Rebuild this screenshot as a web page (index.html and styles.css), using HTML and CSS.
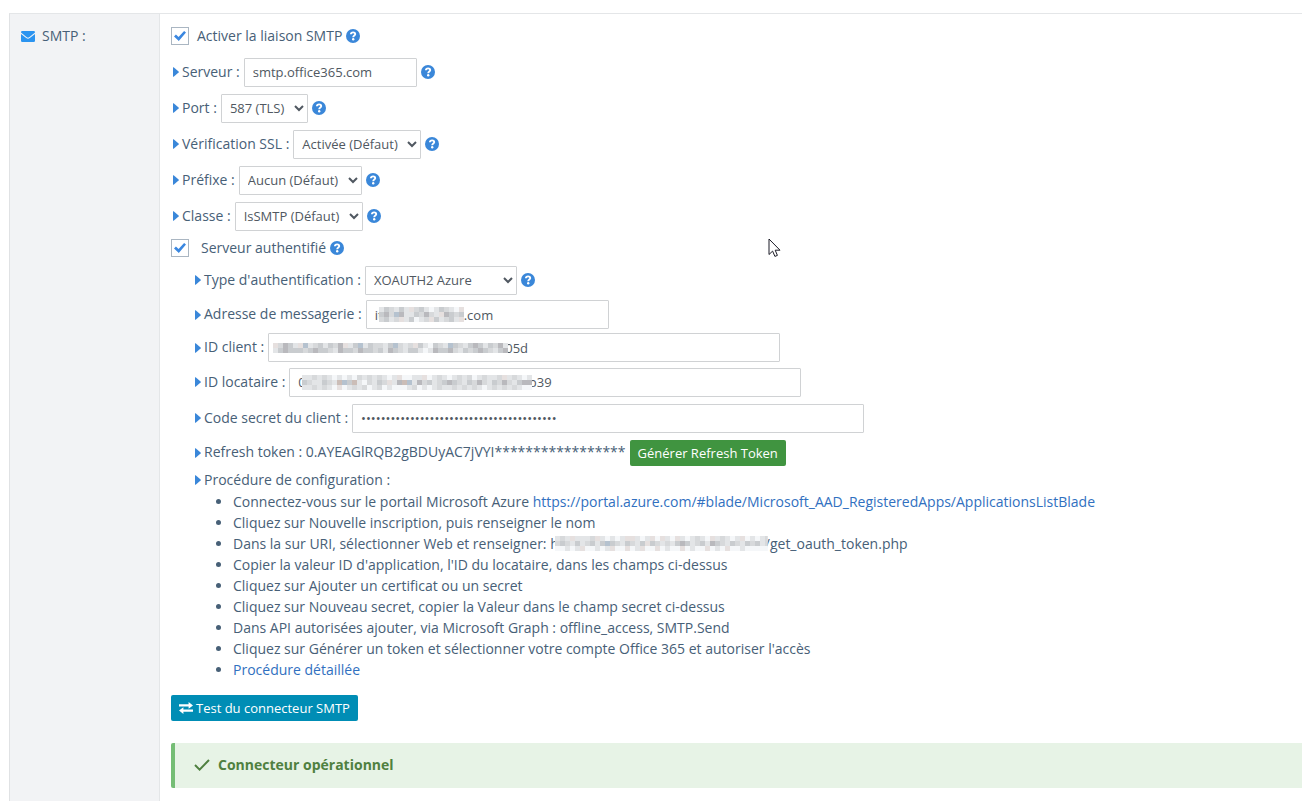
FILE: index.html
```html
<!DOCTYPE html>
<html lang="fr">
<head>
<meta charset="utf-8">
<title>Connecteur SMTP</title>
<link rel="stylesheet" href="styles.css">
</head>
<body>
<svg class="defs" aria-hidden="true">
  <symbol id="help" viewBox="0 0 14 14"><circle cx="7" cy="7" r="7" fill="#3a87d9"/><path d="M4.900 5.300C5 4 5.900 3.400 7.100 3.400S9.200 4.100 9.200 5.200C9.200 6.600 7.200 6.500 7.200 8.200" fill="none" stroke="#fff" stroke-width="1.900"/><circle cx="7.200" cy="10.300" r="1.200" fill="#fff"/></symbol>
  <symbol id="caret" viewBox="0 0 6 10"><path d="M0 .6v8.800q0 .6.600.3L5.600 5.400q.4-.4 0-.8L.6.300Q0 0 0 .6z" fill="#3a87d9"/></symbol>
</svg>
<main class="settings">
  <div class="heading">
    <svg class="mail" viewBox="0 0 14 11"><path fill="#2b94f0" d="M1.300 0h11.400Q14 0 14 1.300v.3L8.200 6.200q-1.200.9-2.400 0L0 1.600v-.3Q0 0 1.300 0zM0 3l5.200 4.100q1.800 1.300 3.600 0L14 3v6.700Q14 11 12.700 11H1.300Q0 11 0 9.700z"/></svg>
    <span>SMTP :</span>
  </div>
  <div class="content">
    <div class="row">
      <input type="checkbox" id="smtp" class="check" checked><label for="smtp" class="check-label">Activer la liaison SMTP</label>
      <svg class="help"><use href="#help"/></svg>
    </div>
    <div class="row">
      <svg class="caret"><use href="#caret"/></svg><label for="server">Serveur :</label>
      <input type="text" id="server" class="field server" value="smtp.office365.com">
      <svg class="help"><use href="#help"/></svg>
    </div>
    <div class="row">
      <svg class="caret"><use href="#caret"/></svg><label for="port">Port :</label>
      <select id="port" class="field"><option>587 (TLS)</option></select>
      <svg class="help"><use href="#help"/></svg>
    </div>
    <div class="row">
      <svg class="caret"><use href="#caret"/></svg><label for="ssl">Vérification SSL :</label>
      <select id="ssl" class="field"><option>Activée (Défaut)</option></select>
      <svg class="help"><use href="#help"/></svg>
    </div>
    <div class="row">
      <svg class="caret"><use href="#caret"/></svg><label for="prefix">Préfixe :</label>
      <select id="prefix" class="field"><option>Aucun (Défaut)</option></select>
      <svg class="help"><use href="#help"/></svg>
    </div>
    <div class="row">
      <svg class="caret"><use href="#caret"/></svg><label for="class">Classe :</label>
      <select id="class" class="field"><option>IsSMTP (Défaut)</option></select>
      <svg class="help"><use href="#help"/></svg>
    </div>
    <div class="row row-check">
      <input type="checkbox" id="auth" class="check" checked><label for="auth" class="check-label wide">Serveur authentifié</label>
      <svg class="help"><use href="#help"/></svg>
    </div>
    <div class="auth">
      <div class="row">
        <svg class="caret"><use href="#caret"/></svg><label for="type">Type d'authentification :</label>
        <select id="type" class="field type"><option>XOAUTH2 Azure</option></select>
        <svg class="help"><use href="#help"/></svg>
      </div>
      <div class="row row-tight">
        <svg class="caret"><use href="#caret"/></svg><label for="mail">Adresse de messagerie :</label>
        <div class="field masked mail-field"><span>it</span><svg class="mosaic" data-rows="dbcdbdecbdfdbcdfe bacgaddbcacdeabcb cbdcedbfdcebdcbde"></svg><input type="text" id="mail" value=".com"></div>
      </div>
      <div class="row row-tight">
        <svg class="caret"><use href="#caret"/></svg><label for="client">ID client :</label>
        <div class="field masked long"><svg class="mosaic" data-rows="ecabdegdcbdbcaedbgdbccdbgcdcebdfbcdgbcdbabdbcad dbabbbcbabbcdabbcabbcbdabcdbbdfdabbacdbcbabcdba"></svg><input type="text" id="client" value="05d"></div>
      </div>
      <div class="row">
        <svg class="caret"><use href="#caret"/></svg><label for="tenant">ID locataire :</label>
        <div class="field masked long"><span>0</span><svg class="mosaic" data-rows="ddcdcdfdfdfcdcdcdfdeffddefdcdfdcdcfdcddcedcdfd bcddbcdhgbhdfcdbcedahgdacbdcbabcdbcacdbcacdbaa ddcdcdfefdcdcfdcfdfffdcfdfdcddcdcdcdfdcdcdcdff"></svg><input type="text" id="tenant" value="b39"></div>
      </div>
      <div class="row">
        <svg class="caret"><use href="#caret"/></svg><label for="secret">Code secret du client :</label>
        <input type="password" id="secret" class="field long" value="0000000000000000000000000000000000000000">
      </div>
      <div class="row row-tight">
        <svg class="caret"><use href="#caret"/></svg><span>Refresh token : 0.AYEAGlRQB2gBDUyAC7jVYI*****************</span>
        <button type="button" class="btn btn-green">Générer Refresh Token</button>
      </div>
      <div class="row row-text"><svg class="caret"><use href="#caret"/></svg><span>Procédure de configuration :</span></div>
      <ul class="steps">
        <li>Connectez-vous sur le portail Microsoft Azure <a href="#azure">https://portal.azure.com/#blade/Microsoft_AAD_RegisteredApps/ApplicationsListBlade</a></li>
        <li>Cliquez sur Nouvelle inscription, puis renseigner le nom</li>
        <li>Dans la sur URI, sélectionner Web et renseigner: <span class="url">h<svg class="mosaic" data-rows="dcdedddcedfdfdeedfdefedfedfdcdfedcdfdefdfdcd cbcdbdcbdbgbcdbcdbebcdcdbabdcbdabcdbcdbcbdcb ffdfdeffdfdeffefdeffefdffefdffefdfeffdffffff"></svg>/get_oauth_token.php</span></li>
        <li>Copier la valeur ID d'application, l'ID du locataire, dans les champs ci-dessus</li>
        <li>Cliquez sur Ajouter un certificat ou un secret</li>
        <li>Cliquez sur Nouveau secret, copier la Valeur dans le champ secret ci-dessus</li>
        <li>Dans API autorisées ajouter, via Microsoft Graph : offline_access, SMTP.Send</li>
        <li>Cliquez sur Générer un token et sélectionner votre compte Office 365 et autoriser l'accès</li>
        <li><a href="#procedure">Procédure détaillée</a></li>
      </ul>
    </div>
    <button type="button" class="btn btn-blue"><svg viewBox="0 0 14 12"><path d="M0 3.400h11M14 8.600H3" fill="none" stroke="#fff" stroke-width="2.200"/><path d="M9.600 0v6.800L14 3.400zM4.400 5.200V12L0 8.600z" fill="#fff"/></svg>Test du connecteur SMTP</button>
    <div class="alert" role="status"><svg viewBox="0 0 16 12"><path d="M1 6l4.600 4.600L15 1" fill="none" stroke="#4f8040" stroke-width="2"/></svg><strong>Connecteur opérationnel</strong></div>
  </div>
</main>
<svg class="cursor" viewBox="0 0 13 20" aria-hidden="true"><path d="M1 1v15.500l3.600-3.400 2.300 5.300 2.500-1-2.200-5.200H12z" fill="#fff" stroke="#1b1b26"/></svg>
<script src="mosaic.js"></script>
</body>
</html>
```
FILE: mosaic.js
```js
// Paints each hidden value as a grid of 5px cells.
const palette = { a: '#b9b9bd', b: '#c9cccf', c: '#d7d9db', d: '#e3e5e7', e: '#e6e0df', f: '#f5f7f9', g: '#b5c2cf', h: '#cbbdb7' };
document.querySelectorAll('.mosaic').forEach(svg => {
  const rows = svg.dataset.rows.split(' ');
  const cols = rows[0].length;
  svg.setAttribute('width', cols * 5);
  svg.setAttribute('height', rows.length * 5);
  rows.forEach((row, y) => [...row.slice(0, cols)].forEach((key, x) => {
    const cell = document.createElementNS('http://www.w3.org/2000/svg', 'rect');
    cell.setAttribute('x', x * 5);
    cell.setAttribute('y', y * 5);
    cell.setAttribute('width', 5);
    cell.setAttribute('height', 5);
    cell.setAttribute('fill', palette[key]);
    svg.append(cell);
  }));
});
```
FILE: styles.css
```css
* { box-sizing: border-box; }
body {
  margin: 0;
  padding: 13px 0 0 9px;
  background: #fff;
  color: #476077;
  font: 14px/21px "Open Sans", "Noto Sans", sans-serif;
  overflow: hidden;
}
svg { flex: none; }
.defs { display: none; }
a { color: #3170c0; text-decoration: none; }

.settings {
  display: grid;
  grid-template-columns: 150px minmax(0, 1fr);
  min-height: calc(100vh - 13px);
  border-top: 1px solid #e4e6e8;
  border-left: 1px solid #e0e2e4;
}
.heading {
  display: flex;
  gap: 7px;
  padding: 11px;
  background: #f2f3f5;
  border-right: 1px solid #e4e6e8;
}
.mail { width: 14px; height: 11px; margin-top: 6px; }
.content { padding: 4px 0 12px 11px; }

.row { display: flex; align-items: center; gap: 4px; height: 36px; white-space: nowrap; }
.row > label, .row > span { padding-bottom: 2px; }
.row-check { height: 28px; }
.row-tight { height: 33px; }
.row-text { height: 22px; }
.caret { width: 6px; height: 10px; margin-left: 2px; margin-right: -1px; }
.help { width: 14px; height: 14px; }
.auth { padding-left: 22px; }

.check {
  appearance: none;
  display: grid;
  place-items: center;
  width: 18px;
  height: 18px;
  margin: 0;
  border: 1px solid #aab6c2;
  background: #fff;
}
.check:checked::before {
  content: "";
  width: 12px;
  height: 10px;
  background: #3a87e0;
  clip-path: polygon(0 54%, 16% 36%, 38% 60%, 84% 0, 100% 16%, 40% 100%);
}
.check-label { margin-left: 4px; }
.check-label.wide { margin-left: 8px; }

.field {
  height: 29px;
  margin: 0;
  padding: 0 8px;
  border: 1px solid #d0d2d4;
  border-radius: 1px;
  background: #fff;
  color: #505861;
  font: 13px/20px "Open Sans", "Noto Sans", sans-serif;
}
select.field { padding: 0 6px 0 4px; }
select.type { padding-right: 1px; }
.server { width: 173px; }
.type { width: 152px; }
.mail-field { width: 243px; }
.long { width: 512px; }
.masked { display: flex; align-items: center; }
.masked input {
  flex: 1;
  min-width: 0;
  padding: 0;
  border: 0;
  background: none;
  color: inherit;
  font: inherit;
}
.mosaic { position: relative; z-index: 1; margin-left: -4px; }
.long .mosaic { margin-right: -3px; }
.url { display: inline-flex; align-items: center; vertical-align: top; }
.url .mosaic { margin-right: -10px; clip-path: inset(0 7px 0 0); }

.btn {
  display: inline-flex;
  align-items: center;
  gap: 3px;
  height: 26px;
  padding: 0 8px;
  border: 0;
  border-radius: 2px;
  color: #fff;
  font: 500 13px/20px "Open Sans", "Noto Sans", sans-serif;
}
.btn-green { background: #409440; }
.btn-blue { background: #008db5; margin-top: 15px; }
.btn svg { width: 14px; height: 12px; }

.steps { margin: 0; padding-left: 40px; }
.steps li { height: 21px; white-space: nowrap; }

.alert {
  display: flex;
  align-items: center;
  gap: 8px;
  height: 45px;
  margin-top: 22px;
  padding: 0 0 2px 19px;
  border-left: 4px solid #75bd75;
  border-radius: 2px 0 0 2px;
  background: #e7f3e6;
  color: #4f8040;
}
.alert svg { width: 16px; height: 12px; }

.cursor { position: absolute; left: 768px; top: 238px; width: 13px; height: 20px; }
```
